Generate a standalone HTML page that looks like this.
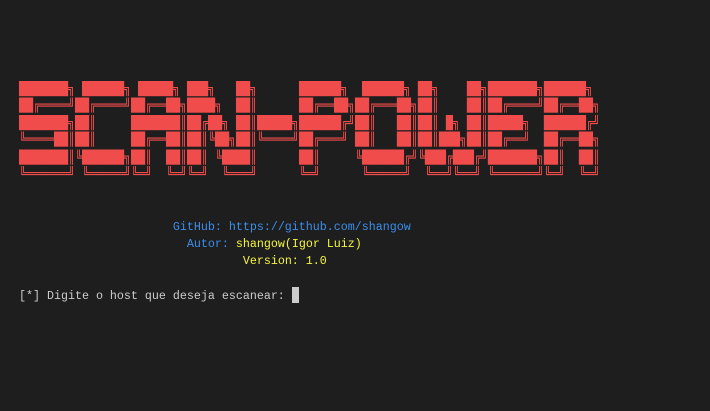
<!DOCTYPE html>
<html><head><meta charset="utf-8"><style>
body{margin:0;background:#1e1e1e;width:710px;height:411px;overflow:hidden;}
pre{margin:0;position:absolute;left:19px;font-family:"DejaVu Sans Mono","Liberation Mono",monospace;font-size:11.63px;line-height:17px;white-space:pre;}
#b{top:81px;color:#f14c4c;line-height:15.45px;transform:scaleY(1.1);transform-origin:0 0;}
#t{top:219px;color:#cccccc;font-family:"Liberation Mono","DejaVu Sans Mono",monospace;font-size:11.67px;}
.bl{color:#3b8eea}.y{color:#f5f543}
.cur{display:inline-block;width:7px;height:16px;background:#cccccc;vertical-align:-4px;}
</style></head><body>
<pre id="b">███████╗ ██████╗ █████╗ ███╗   ██╗      ██████╗  ██████╗ ██╗    ██╗███████╗██████╗ 
██╔════╝██╔════╝██╔══██╗████╗  ██║      ██╔══██╗██╔═══██╗██║    ██║██╔════╝██╔══██╗
███████╗██║     ███████║██╔██╗ ██║█████╗██████╔╝██║   ██║██║ █╗ ██║█████╗  ██████╔╝
╚════██║██║     ██╔══██║██║╚██╗██║╚════╝██╔═══╝ ██║   ██║██║███╗██║██╔══╝  ██╔══██╗
███████║╚██████╗██║  ██║██║ ╚████║      ██║     ╚██████╔╝╚███╔███╔╝███████╗██║  ██║
╚══════╝ ╚═════╝╚═╝  ╚═╝╚═╝  ╚═══╝      ╚═╝      ╚═════╝  ╚══╝╚══╝ ╚══════╝╚═╝  ╚═╝</pre>
<pre id="t">                      <span class="bl">GitHub: https://github.com/shangow</span>
                        <span class="bl">Autor:</span> <span class="y">shangow(Igor Luiz)</span>
                                <span class="y">Version: 1.0</span>

[*] Digite o host que deseja escanear: <span class="cur"></span></pre>
</body></html>
